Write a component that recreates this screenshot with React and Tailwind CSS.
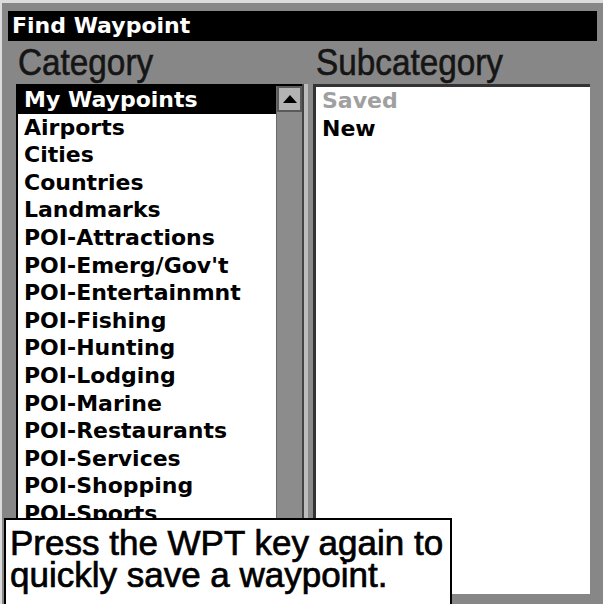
import React from "react";

const items = [
  "My Waypoints",
  "Airports",
  "Cities",
  "Countries",
  "Landmarks",
  "POI-Attractions",
  "POI-Emerg/Gov't",
  "POI-Entertainmnt",
  "POI-Fishing",
  "POI-Hunting",
  "POI-Lodging",
  "POI-Marine",
  "POI-Restaurants",
  "POI-Services",
  "POI-Shopping",
  "POI-Sports",
  "POI-Transportation",
];

export default function App() {
  return (
    <div className="relative w-[603px] h-[604px] overflow-hidden bg-[#878787] border-t-[3px] border-l-2 border-[#dcdcdc] flex flex-col">
      <div className="mx-[6px] mt-[8px] h-[30px] shrink-0 bg-black text-white font-['DejaVu_Sans',sans-serif] font-bold text-[22px] leading-[30px] pl-[4px] whitespace-nowrap">
        Find Waypoint
      </div>
      <div className="flex h-[43px] shrink-0 pt-[3px] text-[#151515] font-['Liberation_Sans',Arial,sans-serif] text-[37px] leading-[38px] [-webkit-text-stroke:0.6px_#151515]">
        <div className="w-[298px] pl-[16px]">
          <span className="inline-block origin-left scale-x-[0.9]">Category</span>
        </div>
        <div className="pl-[16px]">
          <span className="inline-block origin-left scale-x-[0.9]">Subcategory</span>
        </div>
      </div>
      <div className="flex flex-1 min-h-0 pb-[10px] pl-[14px] pr-[13px]">
        <div className="flex w-[286px] border-l-2 border-t-2 border-black">
          <div className="w-[258px] bg-white overflow-hidden font-['DejaVu_Sans',sans-serif] font-bold text-[22px] leading-[27.6px] whitespace-nowrap">
            {items.map((t, i) => (
              <div
                key={t}
                className={
                  i === 0
                    ? "h-[27.6px] pl-[6px] bg-black text-white"
                    : "h-[27.6px] pl-[6px] text-black"
                }
              >
                {t}
              </div>
            ))}
          </div>
          <div className="w-[26px] flex flex-col bg-[#8c8c8c] border-l border-[#6a6a6a]">
            <div className="h-[26px] border-2 border-[#5a5a5a] bg-[#b3b3b3] flex items-center justify-center">
              <svg width="14" height="8" viewBox="0 0 14 8">
                <polygon points="7,0 14,8 0,8" fill="#000" />
              </svg>
            </div>
            <div className="flex-1" />
          </div>
        </div>
        <div className="w-[2px] bg-[#444]" />
        <div className="w-[4px] bg-[#bcbcbc]" />
        <div className="w-[5px] bg-[#8a8a8a]" />
        <div className="flex-1 bg-white border-l-[3px] border-t-[3px] border-[#333] pl-[6px] font-['DejaVu_Sans',sans-serif] font-bold text-[22px] leading-[27.6px]">
          <div className="h-[27.6px] text-[#a0a0a0]">Saved</div>
          <div className="h-[27.6px] text-black">New</div>
        </div>
      </div>
      <div className="absolute left-[2px] top-[515px] w-[448px] h-[100px] bg-white border-2 border-black pt-[7px] pl-[4px] font-['Liberation_Sans',Arial,sans-serif] text-[35px] leading-[32px] text-black whitespace-nowrap [-webkit-text-stroke:0.7px_black]">
        <div>Press the WPT key again to</div>
        <div>quickly save a waypoint.</div>
      </div>
    </div>
  );
}
